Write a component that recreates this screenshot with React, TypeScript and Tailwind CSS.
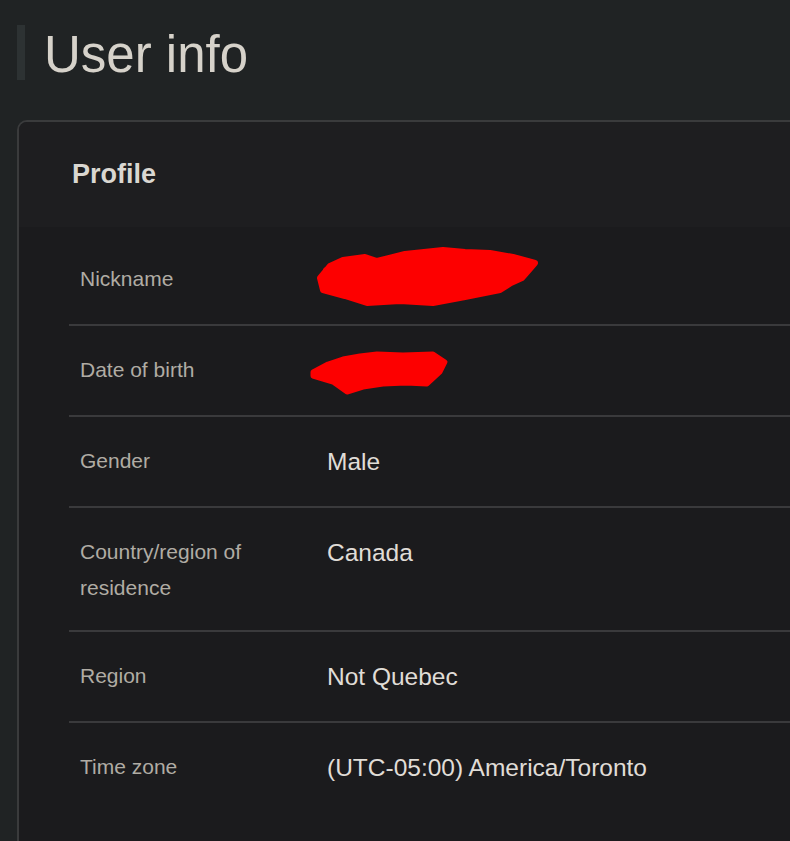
import React from 'react';

type Row = {
  label: string;
  value?: string;
  redact?: 'nick' | 'dob';
};

const rows: Row[] = [
  { label: 'Nickname', redact: 'nick' },
  { label: 'Date of birth', redact: 'dob' },
  { label: 'Gender', value: 'Male' },
  { label: 'Country/region of residence', value: 'Canada' },
  { label: 'Region', value: 'Not Quebec' },
  { label: 'Time zone', value: '(UTC-05:00) America/Toronto' },
];

// red marker scribbles used to hide personal data
function Scribble({ kind }: { kind: 'nick' | 'dob' }) {
  if (kind === 'nick') {
    return (
      <svg
        className="absolute left-[-12px] top-[-16px]"
        width="230"
        height="68"
        viewBox="0 0 230 68"
      >
        <path
          d="M28 17 L50 14 L62 18 L90 11 L128 7 L150 9 L175 10 L198 14 L220 20 L214 27 L207 35 L196 40 L185 47 L150 54 L118 60 L85 58 L52 60 L30 53 L8 47 L5 35 L15 23 Z"
          fill="#fd0000"
          stroke="#fd0000"
          strokeWidth="6"
          strokeLinejoin="round"
        />
        <path d="M12 28 C60 18 150 12 215 20" stroke="#fd0000" strokeWidth="8" strokeLinecap="round" fill="none" />
        <path d="M10 44 C70 52 150 46 200 36" stroke="#fd0000" strokeWidth="8" strokeLinecap="round" fill="none" />
      </svg>
    );
  }
  return (
    <svg
      className="absolute left-[-19px] top-[-3px]"
      width="145"
      height="52"
      viewBox="0 0 145 52"
    >
      <path
        d="M5 25 L20 17 L35 12 L52 9 L69 7 L95 8 L125 7 L137 15 L132 25 L119 37 L98 36 L75 37 L55 40 L39 45 L25 35 L5 29 Z"
        fill="#fd0000"
        stroke="#fd0000"
        strokeWidth="5"
        strokeLinejoin="round"
      />
      <path d="M8 26 C40 18 100 12 134 16" stroke="#fd0000" strokeWidth="7" strokeLinecap="round" fill="none" />
    </svg>
  );
}

export default function App() {
  return (
    <div
      className="w-[790px] h-[841px] overflow-hidden bg-[#202324] pt-[25px] pl-[17px]"
      style={{ fontFamily: '"Liberation Sans", Arial, sans-serif' }}
    >
      <div className="flex items-start h-[55px]">
        <span className="w-[8px] h-[55px] bg-[#2d3233]" />
        <h1 className="ml-[19px] pt-[2px] text-[51px] leading-[55px] text-[#d6d2ca] font-normal">
          User info
        </h1>
      </div>

      <div className="mt-[40px] w-[820px] rounded-tl-[10px] border-2 border-[#3a3b3c] overflow-hidden">
        <div className="h-[105px] flex items-center pl-[53px] bg-[#1e1e20]">
          <h2 className="text-[27px] font-bold text-[#dad7d1]">Profile</h2>
        </div>

        <div className="bg-[#1b1b1d] pt-[8px] pl-[50px] pb-[40px]">
          <div className="divide-y-2 divide-[#3a3a3c]">
            {rows.map((r) => (
              <div key={r.label} className="flex py-[24px]">
                <div className="w-[258px] shrink-0 pl-[11px] pr-[12px] pt-[2px] text-[21px] leading-[36px] text-[#b0aca4]">
                  {r.label}
                </div>
                <div className="relative flex-1 text-[24.5px] leading-[41px] text-[#e0ddd7]">
                  {r.redact ? (
                    <>
                      <span className="invisible">&nbsp;</span>
                      <Scribble kind={r.redact} />
                    </>
                  ) : (
                    r.value
                  )}
                </div>
              </div>
            ))}
          </div>
        </div>
      </div>
    </div>
  );
}
